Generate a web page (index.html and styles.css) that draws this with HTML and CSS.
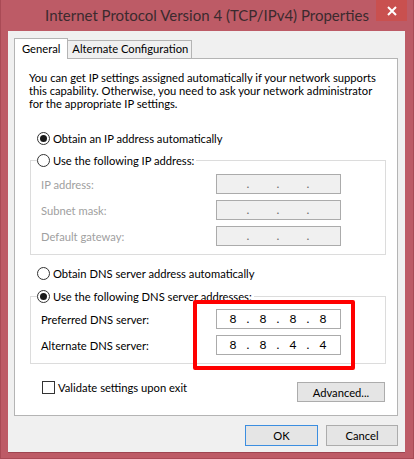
FILE: index.html
```html
<!DOCTYPE html>
<html lang="en">
<head>
  <meta charset="UTF-8" />
  <meta name="viewport" content="width=device-width, initial-scale=1" />
  <title>Internet Protocol Version 4 (TCP/IPv4) Properties</title>
  <link rel="stylesheet" href="styles.css">
</head>
<body>

  <div class="window">
    <div class="titlebar">
      <span></span>
      <h1 class="title">Internet Protocol Version 4 (TCP/IPv4) Properties</h1>
      <div class="close">
        <svg width="10" height="10" viewBox="0 0 10 10">
          <path d="M1 1 L9 9 M9 1 L1 9" stroke="#fff" stroke-width="2" />
        </svg>
      </div>
    </div>

    <div class="client">
      <div class="tabs">
        <div class="tab selected">General</div>
        <div class="tab">Alternate Configuration</div>
      </div>

      <div class="panel">
        <p class="intro">You can get IP settings assigned automatically if your network supports<br>this capability. Otherwise, you need to ask your network administrator<br>for the appropriate IP settings.</p>

        <div class="option first"><span class="radio checked"></span>Obtain an IP address automatically</div>

        <fieldset class="group disabled">
          <legend class="option"><span class="radio"></span>Use the following IP address:</legend>
          <div class="field">
            <span class="label">IP address:</span>
            <span class="ipbox"><span class="oct"></span><span class="dot">.</span><span class="oct"></span><span class="dot">.</span><span class="oct"></span><span class="dot">.</span><span class="oct"></span></span>
          </div>
          <div class="field">
            <span class="label">Subnet mask:</span>
            <span class="ipbox"><span class="oct"></span><span class="dot">.</span><span class="oct"></span><span class="dot">.</span><span class="oct"></span><span class="dot">.</span><span class="oct"></span></span>
          </div>
          <div class="field">
            <span class="label">Default gateway:</span>
            <span class="ipbox"><span class="oct"></span><span class="dot">.</span><span class="oct"></span><span class="dot">.</span><span class="oct"></span><span class="dot">.</span><span class="oct"></span></span>
          </div>
        </fieldset>

        <div class="option dns-auto"><span class="radio"></span>Obtain DNS server address automatically</div>

        <fieldset class="group dns">
          <legend class="option"><span class="radio checked"></span>Use the following DNS server addresses:</legend>
          <div class="field">
            <span class="label">Preferred DNS server:</span>
            <span class="ipbox"><span class="oct">8</span><span class="dot">.</span><span class="oct">8</span><span class="dot">.</span><span class="oct">8</span><span class="dot">.</span><span class="oct">8</span></span>
          </div>
          <div class="field">
            <span class="label">Alternate DNS server:</span>
            <span class="ipbox"><span class="oct">8</span><span class="dot">.</span><span class="oct">8</span><span class="dot">.</span><span class="oct">4</span><span class="dot">.</span><span class="oct">4</span></span>
          </div>
        </fieldset>

        <div class="bottom-row">
          <div class="option"><span class="checkbox"></span>Validate settings upon exit</div>
          <button class="btn advanced">Advanced...</button>
        </div>

        <!-- annotation drawn over the DNS fields -->
        <div class="highlight"></div>
      </div>

      <div class="footer">
        <button class="btn default">OK</button>
        <button class="btn">Cancel</button>
      </div>
    </div>
  </div>

</body>
</html>
```

FILE: styles.css
```css
body {
  margin: 0;
  font-family: Lato, "Liberation Sans", sans-serif;
  font-size: 11.2px;
  color: #000;
  background: #bd5b66;
}

.window {
  width: 414px;
  height: 459px;
  box-sizing: border-box;
  background: #bd5b66;
  border-left: 1px solid #a94a55;
  border-right: 1px solid #a94a55;
  border-bottom: 1px solid #a94a55;
}

/* Title bar */
.titlebar {
  height: 31px;
  display: grid;
  grid-template-columns: 1fr auto 1fr;
}

.title {
  margin: 0;
  font-family: inherit;
  font-weight: normal;
  font-size: 15px;
  line-height: 30px;
  color: #3b2a2e;
  white-space: nowrap;
}

.close {
  justify-self: end;
  align-self: start;
  width: 31px;
  height: 21px;
  margin-right: 6px;
  background: #c9504f;
  display: flex;
  align-items: center;
  justify-content: center;
}

/* Client area */
.client {
  margin-left: 7px;
  width: 397px;
  height: 422px;
  box-sizing: border-box;
  padding: 7px 7px 7px 6px;
  background: #f0f0f0;
  border-bottom: 1px solid #9e4651;
}

.tabs {
  display: flex;
  align-items: flex-start;
  height: 21px;
  margin-bottom: -1px;
}

.tab {
  box-sizing: border-box;
  height: 18px;
  margin-top: 2px;
  padding: 0 3px 0 4px;
  line-height: 16px;
  border: 1px solid #b4b4b4;
  border-bottom: none;
  border-left: none;
  background: #f0f0f0;
}

.tab.selected {
  position: relative;
  z-index: 1;
  height: 21px;
  margin-top: 0;
  padding: 0 7px;
  line-height: 20px;
  border-left: 1px solid #b4b4b4;
  background: #fff;
}

.panel {
  position: relative;
  box-sizing: border-box;
  height: 358px;
  padding: 12px 11px 13px 15px;
  background: #fff;
  border: 1px solid #b4b4b4;
}

.intro {
  margin: 0 0 0 -1px;
  line-height: 13px;
  white-space: nowrap;
}

/* Radio and checkbox rows */
.option {
  display: flex;
  align-items: center;
  height: 15px;
  line-height: 15px;
  white-space: nowrap;
}

.option.first {
  margin-top: 21px;
  padding-left: 7px;
}

.option.dns-auto {
  margin-top: 11px;
  padding-left: 7px;
}

.radio {
  box-sizing: border-box;
  width: 13px;
  height: 13px;
  margin-right: 3px;
  border: 1px solid #333;
  border-radius: 50%;
  background: #fff;
  display: flex;
  align-items: center;
  justify-content: center;
}

.radio.checked::after {
  content: "";
  width: 7px;
  height: 7px;
  border-radius: 50%;
  background: #1a1a1a;
}

.checkbox {
  box-sizing: border-box;
  width: 13px;
  height: 13px;
  margin-right: 3px;
  border: 1px solid #333;
  background: #fff;
}

/* Group boxes */
.group {
  margin: 7px 0 0 0;
  padding: 0 0 8px 6px;
  border: 1px solid #dcdcdc;
}

.group legend {
  padding: 0 2px 0 0;
}

.group.dns {
  margin-top: 8px;
}

.field {
  display: flex;
  align-items: center;
  height: 20px;
  margin-top: 6px;
  padding-left: 4px;
}

.group.dns .field:first-of-type {
  margin-top: 5px;
}

.label {
  width: 175px;
}

.disabled .label {
  color: #a0a0a0;
}

.ipbox {
  box-sizing: border-box;
  display: flex;
  width: 125px;
  height: 20px;
  padding-left: 5px;
  line-height: 18px;
  border: 1px solid #ababab;
  background: #fff;
  font-size: 12px;
}

.disabled .ipbox {
  background: #f0f0f0;
  color: #6d6d6d;
}

.oct {
  width: 22px;
  text-align: center;
}

.dot {
  width: 8px;
  text-align: center;
}

/* Bottom row and buttons */
.bottom-row {
  display: flex;
  justify-content: space-between;
  align-items: flex-start;
  margin-top: 16px;
  padding: 0 1px 0 12px;
}

.btn {
  box-sizing: border-box;
  height: 21px;
  padding: 0;
  font-family: inherit;
  font-size: 11.2px;
  color: #000;
  background: #e5e5e5;
  border: 1px solid #acacac;
}

.btn.advanced {
  width: 88px;
  height: 20px;
  margin-top: 2px;
}

.footer {
  display: flex;
  justify-content: flex-end;
  gap: 8px;
  margin-top: 9px;
}

.footer .btn {
  width: 73px;
}

.footer .btn + .btn {
  width: 72px;
}

.btn.default {
  border-color: #3c8ee0;
}

.highlight {
  position: absolute;
  left: 178px;
  top: 241px;
  width: 162px;
  height: 70px;
  box-sizing: border-box;
  border: 4px solid #f00;
  border-radius: 2px;
}
```
